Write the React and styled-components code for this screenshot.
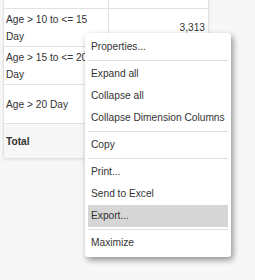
import React from "react";
import styled, { createGlobalStyle } from "styled-components";

const GlobalStyle = createGlobalStyle`
  html, body {
    margin: 0;
    padding: 0;
    background: #f7f7f7;
    font-family: "Liberation Sans", Arial, sans-serif;
    color: #333;
  }
`;

const Page = styled.div`
  position: relative;
  width: 255px;
  height: 280px;
  overflow: hidden;
  font-size: 10.2px;
`;

const Table = styled.div`
  margin: -30px 0 0 3px;
  width: 204px;
  background: #fff;
  border: 1px solid #e2e2e2;
  border-radius: 0 0 3px 3px;
  box-shadow: 0 1px 3px rgba(0, 0, 0, 0.08);
  overflow: hidden;
`;

const Row = styled.div`
  display: grid;
  grid-template-columns: 105px 1fr;
  height: ${(p) => p.$h || 37}px;
  border-top: 1px solid #e2e2e2;
  background: ${(p) => (p.$total ? "#f7f7f7" : "#fff")};
  font-weight: ${(p) => (p.$total ? "bold" : "normal")};

  &:first-child {
    border-top: none;
  }
`;

const Label = styled.div`
  display: flex;
  align-items: center;
  padding: 0 2px;
  line-height: 17px;
  border-right: 1px solid #e2e2e2;
`;

const Value = styled.div`
  display: flex;
  align-items: center;
  justify-content: flex-end;
  padding: 0 3px;
`;

const Menu = styled.div`
  position: absolute;
  left: 85px;
  top: 33px;
  width: 146px;
  box-sizing: border-box;
  padding: 3px;
  background: #fff;
  border-radius: 3px;
  box-shadow: 2px 3px 6px rgba(0, 0, 0, 0.42);
`;

const Item = styled.div`
  height: 22px;
  line-height: 22px;
  padding-left: 3px;
  white-space: nowrap;
  background: ${(p) => (p.$active ? "#d6d6d6" : "transparent")};
`;

const Separator = styled.div`
  height: 1px;
  margin: 2px 0;
  background: #e0e0e0;
`;

const rows = [
  { label: "Age > 5 to <= 10 Day", value: "" },
  { label: "Age > 10 to <= 15 Day", value: "3,313" },
  { label: "Age > 15 to <= 20 Day", value: "2,871" },
  { label: "Age > 20 Day", value: "4,102", h: 38 },
];

const menu = [
  ["Properties..."],
  ["Expand all", "Collapse all", "Collapse Dimension Columns"],
  ["Copy"],
  ["Print...", "Send to Excel", "Export..."],
  ["Maximize"],
];

export default function App() {
  return (
    <Page>
      <GlobalStyle />
      <Table>
        {rows.map((r) => (
          <Row key={r.label} $h={r.h}>
            <Label>{r.label}</Label>
            <Value>{r.value}</Value>
          </Row>
        ))}
        <Row $total $h={34}>
          <Label>Total</Label>
          <Value>12,408</Value>
        </Row>
      </Table>
      <Menu>
        {menu.map((group, gi) => (
          <React.Fragment key={gi}>
            {gi > 0 && <Separator />}
            {group.map((label) => (
              <Item key={label} $active={label === "Export..."}>
                {label}
              </Item>
            ))}
          </React.Fragment>
        ))}
      </Menu>
    </Page>
  );
}
